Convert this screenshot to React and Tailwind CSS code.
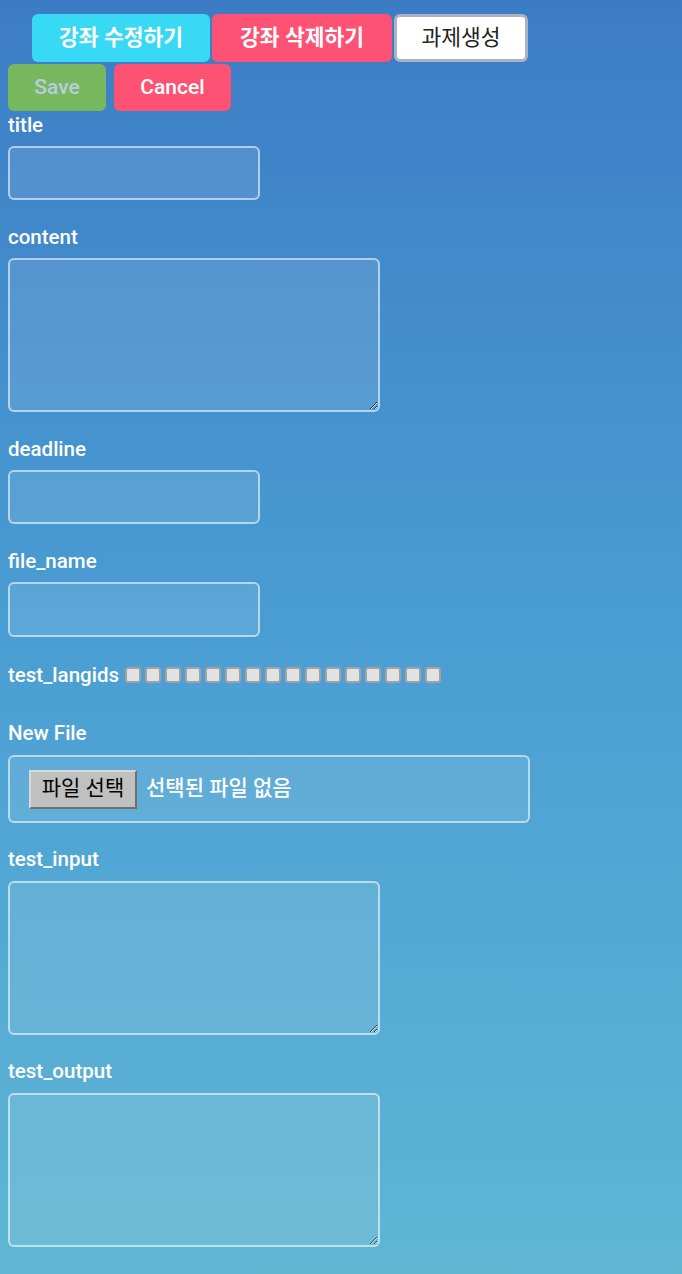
const font = { fontFamily: 'Roboto, "Noto Sans CJK KR", sans-serif' }

function Label({ children, className = '' }) {
  return (
    <label className={`block h-[24px] text-[20.5px] leading-[24px] font-medium text-white ${className}`}>
      {children}
    </label>
  )
}

const boxCls =
  'block rounded-[6px] border-2 border-white/55 bg-white/10 outline-none'

export default function App() {
  return (
    <div
      className="min-h-[1274px] w-full bg-gradient-to-b from-[#3c7cc5] via-[#4a9ed3] to-[#60b6d3] pb-10"
      style={font}
    >
      <div className="flex gap-[2px] pl-[32px] pt-[14px]">
        <button type="button" className="h-[48px] w-[178px] rounded-[6px] bg-[#37d9f4] text-[21.5px] font-bold text-white">
          강좌 수정하기
        </button>
        <button type="button" className="h-[48px] w-[180px] rounded-[6px] bg-[#fd5273] text-[21.5px] font-bold text-white">
          강좌 삭제하기
        </button>
        <button type="button" className="h-[48px] w-[134px] rounded-[6px] border-[3px] border-[#a8b4c4] bg-white text-[21.5px] text-[#222]">
          과제생성
        </button>
      </div>

      <div className="px-[8px]">
        <div className="mt-[2px] flex gap-[8px]">
          <button type="button" className="h-[47px] w-[98px] rounded-[6px] bg-[#77b85f] text-[21px] font-medium text-[#b9cde0]">
            Save
          </button>
          <button type="button" className="h-[47px] w-[117px] rounded-[6px] bg-[#fd5273] text-[21px] font-medium text-white">
            Cancel
          </button>
        </div>

        <Label className="mt-[2px]">title</Label>
        <input className={`${boxCls} mt-[9px] h-[54px] w-[252px]`} />

        <Label className="mt-[25px]">content</Label>
        <textarea className={`${boxCls} mt-[9px] h-[154px] w-[372px]`} />

        <Label className="mt-[25px]">deadline</Label>
        <input className={`${boxCls} mt-[9px] h-[54px] w-[252px]`} />

        <Label className="mt-[25px]">file_name</Label>
        <input className={`${boxCls} mt-[9px] h-[55px] w-[252px]`} />

        <div className="mt-[26px] flex h-[24px] items-center">
          <span className="text-[20.5px] font-medium leading-[24px] text-white">test_langids</span>
          <div className="ml-[6px] flex gap-[4px]">
            {Array.from({ length: 16 }).map((_, i) => (
              <span
                key={i}
                className="block h-[16px] w-[16px] rounded-[3px] border-2 border-[#a3a3a3] bg-[#e2e2e2]"
              />
            ))}
          </div>
        </div>

        <Label className="mt-[34px]">New File</Label>
        <div className={`${boxCls} mt-[10px] flex h-[68px] w-[522px] items-center pl-[19px]`}>
          <span className="flex h-[39px] w-[108px] items-center justify-center border-2 border-t-[#d8d8d8] border-l-[#d8d8d8] border-r-[#707070] border-b-[#707070] bg-[#c0c0c0] text-[21px] text-black">
            파일 선택
          </span>
          <span className="ml-[9px] text-[21px] font-medium text-white">선택된 파일 없음</span>
        </div>

        <Label className="mt-[24px]">test_input</Label>
        <textarea className={`${boxCls} mt-[10px] h-[154px] w-[372px]`} />

        <Label className="mt-[24px]">test_output</Label>
        <textarea className={`${boxCls} mt-[10px] h-[154px] w-[372px]`} />
      </div>
    </div>
  )
}
